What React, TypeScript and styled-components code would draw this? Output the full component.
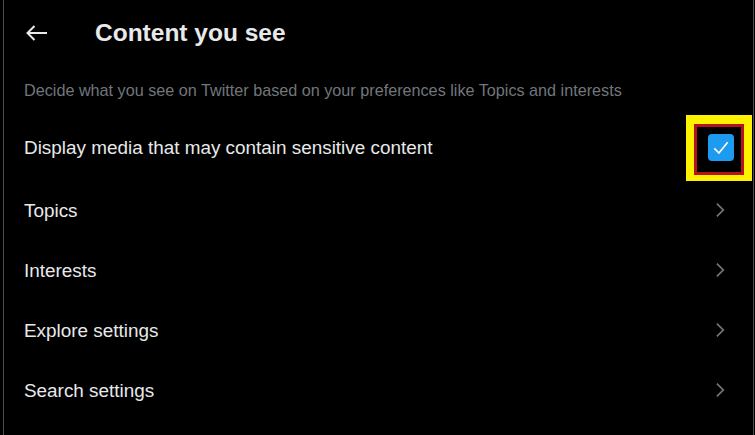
import React from "react";
import styled, { createGlobalStyle } from "styled-components";

const GlobalStyle = createGlobalStyle`
  html, body {
    margin: 0;
    padding: 0;
    background: #000;
  }
  body {
    font-family: "Liberation Sans", Arial, sans-serif;
    color: #e7e9ea;
  }
`;

const Page = styled.div`
  width: 755px;
  height: 435px;
  padding-left: 3px;
  box-sizing: border-box;
  background: #000;
  overflow: hidden;
`;

const Panel = styled.section`
  width: 751px;
  height: 435px;
  box-sizing: border-box;
  border-left: 1px solid #4a4d50;
  border-right: 1px solid #4a4d50;
  display: flex;
  flex-direction: column;
`;

const Header = styled.header`
  height: 66px;
  display: flex;
  align-items: center;
  padding-left: 21px;
  gap: 46px;
`;

const BackButton = styled.button`
  width: 24px;
  height: 24px;
  padding: 0;
  border: none;
  background: transparent;
  color: #e7e9ea;
  display: flex;
  align-items: center;
  justify-content: center;
  cursor: pointer;
`;

const Title = styled.h1`
  margin: 0;
  font-size: 24.5px;
  font-weight: 700;
  line-height: 30px;
  color: #e7e9ea;
`;

const Description = styled.p`
  margin: 0;
  padding: 14px 20px 14px;
  font-size: 16.2px;
  line-height: 20px;
  color: #71767b;
`;

const Row = styled.div<{ $tall?: boolean }>`
  height: ${(p) => (p.$tall ? "66px" : "60px")};
  display: flex;
  align-items: center;
  justify-content: space-between;
  padding: 0 23px 0 20px;
  cursor: pointer;
`;

const Label = styled.span`
  font-size: 18.9px;
  line-height: 25px;
  color: #e7e9ea;
`;

const Highlight = styled.div`
  width: 66px;
  height: 66px;
  box-sizing: border-box;
  padding: 9px 8px 6px 8px;
  margin-right: -22px;
  margin-top: 2px;
  background: #fff200;
`;

const Outline = styled.div`
  width: 50px;
  height: 51px;
  box-sizing: border-box;
  border: 3px solid #b5121b;
  background: #000;
  display: flex;
  align-items: center;
  justify-content: center;
`;

const Check = styled.div`
  width: 26px;
  height: 27px;
  border-radius: 4px;
  background: #1d9bf0;
  display: flex;
  align-items: center;
  justify-content: center;
  margin-left: 3px;
  margin-top: -4px;
`;

const Chevron = styled.svg`
  width: 20px;
  height: 20px;
  fill: #71767b;
`;

const items = ["Topics", "Interests", "Explore settings", "Search settings"];

const App: React.FC = () => {
  return (
    <>
      <GlobalStyle />
      <Page>
        <Panel>
          <Header>
            <BackButton aria-label="Back">
              <svg width="24" height="24" viewBox="0 0 24 24" fill="none" stroke="currentColor" strokeWidth="2">
                <path d="M2.5 12H22" />
                <path d="M9.5 5L2.5 12L9.5 19" />
              </svg>
            </BackButton>
            <Title>Content you see</Title>
          </Header>
          <Description>
            Decide what you see on Twitter based on your preferences like Topics and interests
          </Description>
          <Row $tall>
            <Label>Display media that may contain sensitive content</Label>
            <Highlight>
              <Outline>
                <Check>
                  <svg width="20" height="20" viewBox="0 0 24 24" fill="none" stroke="#fff" strokeWidth="2">
                    <path d="M4 12.5L9.5 18L20 5" />
                  </svg>
                </Check>
              </Outline>
            </Highlight>
          </Row>
          {items.map((item) => (
            <Row key={item}>
              <Label>{item}</Label>
              <Chevron viewBox="0 0 24 24">
                <path d="M14.586 12L7.543 4.96l1.414-1.42L17.414 12l-8.457 8.46-1.414-1.42L14.586 12z" />
              </Chevron>
            </Row>
          ))}
        </Panel>
      </Page>
    </>
  );
};

export default App;
